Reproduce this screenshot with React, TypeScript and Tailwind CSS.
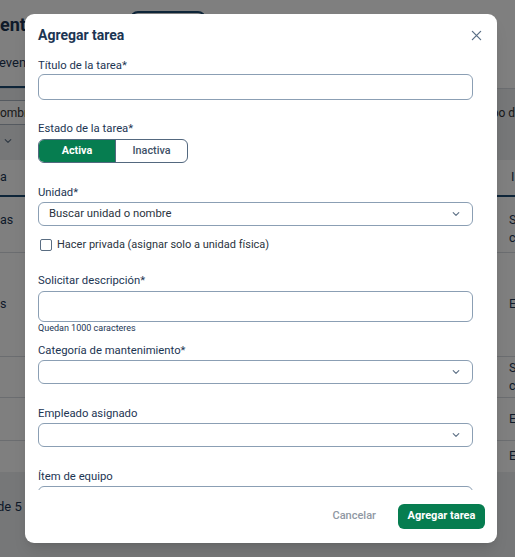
import React from "react";

const font = { fontFamily: "Roboto, 'Noto Sans', sans-serif" };

function Chevron() {
  return (
    <svg width="12" height="12" viewBox="0 0 12 12" fill="none" className="text-[#5b6f84]">
      <path d="M3.2 4.6 L6 7.4 L8.8 4.6" stroke="currentColor" strokeWidth="1.1" strokeLinecap="round" strokeLinejoin="round" />
    </svg>
  );
}

function Label({ children, className = "" }: { children: React.ReactNode; className?: string }) {
  return <div className={`text-[11.3px] leading-[16px] text-[#1c3553] ${className}`}>{children}</div>;
}

function SelectBox({ placeholder, className = "" }: { placeholder?: string; className?: string }) {
  return (
    <div className={`h-[24px] w-[435px] rounded-[6px] border border-[#8b9fb4] flex items-center justify-between pl-[10px] pr-[10px] ${className}`}>
      <span className="text-[11.3px] text-[#2a3340]">{placeholder ?? ""}</span>
      <Chevron />
    </div>
  );
}

export default function App() {
  return (
    <div className="relative w-[515px] h-[557px] overflow-hidden bg-white" style={font}>
      {/* Background page */}
      <div className="flex flex-col w-full h-full text-[#1c3553]">
        <div className="h-[50px] relative flex items-start">
          <span className="mt-[12px] text-[18px] font-bold leading-[26px]">ento</span>
          <div className="absolute left-[130px] top-[11px] w-[76px] h-[28px] rounded-[8px] border-2 border-[#1c4a73]" />
        </div>
        <div className="h-[38px] flex flex-col">
          <span className="text-[13px] leading-[20px] mt-[3px] -ml-[1px]">even</span>
          <div className="mt-auto h-[2px] w-[26px] bg-[#1c4a73]" />
        </div>
        <div className="h-[72px] bg-[#eceef1] flex flex-col border-t border-[#d7dbe0]">
          <div className="flex justify-between mt-[11px]">
            <div className="h-[25px] w-[30px] border-y border-r border-[#aab4c0] bg-white flex items-center text-[12px] text-[#333]">ombr</div>
            <div className="text-[12px] text-[#333] pt-[4px]">po d</div>
          </div>
          <div className="pl-[2px] mt-[10px]">
            <Chevron />
          </div>
        </div>
        <div className="h-[37px] flex items-center justify-between border-b-2 border-[#1c4a73] text-[12.5px]">
          <span>a</span>
          <span className="w-[4px] overflow-hidden">I</span>
        </div>
        <div className="h-[56px] flex justify-between border-b border-[#d7dbe0] text-[12.5px] pt-[14px]">
          <span>as</span>
          <span className="leading-[18px] w-[6px] overflow-hidden">S<br />c</span>
        </div>
        <div className="h-[104px] flex justify-between items-center border-b border-[#d7dbe0] text-[12.5px]">
          <span>s</span>
          <span className="w-[6px] overflow-hidden">E</span>
        </div>
        <div className="h-[41px] flex justify-between items-center border-b border-[#d7dbe0] text-[12.5px]">
          <span />
          <span className="leading-[18px] w-[6px] overflow-hidden">S<br />c</span>
        </div>
        <div className="h-[43px] flex justify-between items-center border-b border-[#d7dbe0] text-[12.5px]">
          <span />
          <span className="w-[6px] overflow-hidden">E</span>
        </div>
        <div className="h-[31px] flex justify-between items-center text-[12.5px]">
          <span />
          <span className="w-[6px] overflow-hidden">E</span>
        </div>
        <div className="flex-1 bg-[#eceef1] pt-[25px] text-[13px]">
          <span className="-ml-[3px]">de 5</span>
        </div>
      </div>

      {/* Overlay */}
      <div className="absolute inset-0 bg-black/50" />

      {/* Modal */}
      <div className="absolute left-[25px] top-[14px] w-[472px] h-[529px] bg-white rounded-[9px] shadow-lg flex flex-col">
        <div className="flex items-start justify-between pl-[13px] pr-[15px] pt-[11px] h-[42px] shrink-0">
          <span className="text-[14px] font-bold text-[#1c3553] leading-[20px]">Agregar tarea</span>
          <svg width="11" height="11" viewBox="0 0 12 12" className="text-[#5a6f86] mt-[5px]">
            <path d="M1.5 1.5 L10.5 10.5 M10.5 1.5 L1.5 10.5" stroke="currentColor" strokeWidth="1.4" strokeLinecap="round" />
          </svg>
        </div>
        <div className="flex-1 overflow-hidden pl-[13px] pr-[24px] flex flex-col">
          <Label className="mt-[2px]">Título de la tarea*</Label>
          <div className="h-[26px] w-[435px] rounded-[6px] border border-[#8b9fb4] shrink-0" />

          <Label className="mt-[21px]">Estado de la tarea*</Label>
          <div className="mt-[2px] flex h-[24px] w-[150px] rounded-[6px] border border-[#53687f] overflow-hidden shrink-0 text-[10.8px]">
            <div className="w-[76px] bg-[#067d50] text-white font-bold flex items-center justify-center">Activa</div>
            <div className="flex-1 border-l border-[#53687f] text-[#3d5066] font-medium flex items-center justify-center">Inactiva</div>
          </div>

          <Label className="mt-[22px]">Unidad*</Label>
          <SelectBox placeholder="Buscar unidad o nombre" className="mt-[1px] shrink-0" />
          <div className="flex items-center mt-[11px] shrink-0">
            <div className="ml-[2px] w-[12px] h-[12px] rounded-[2px] border border-[#5a6d82]" />
            <span className="ml-[5px] text-[11px] text-[#2a3340] leading-[16px]">Hacer privada (asignar solo a unidad física)</span>
          </div>

          <Label className="mt-[20px]">Solicitar descripción*</Label>
          <div className="mt-[2px] h-[31px] w-[435px] rounded-[6px] border border-[#8b9fb4] shrink-0" />
          <div className="text-[9px] leading-[12px] text-[#1c3553]">Quedan 1000 caracteres</div>

          <Label className="mt-[9px]">Categoría de mantenimiento*</Label>
          <SelectBox className="mt-[1px] shrink-0" />

          <Label className="mt-[22px]">Empleado asignado</Label>
          <SelectBox className="mt-[1px] shrink-0" />

          <Label className="mt-[22px]">Ítem de equipo</Label>
          <div className="mt-[1px] h-[24px] w-[435px] rounded-[6px] border border-[#8b9fb4] shrink-0" />
        </div>
        <div className="h-[53px] flex items-center justify-end pr-[12px] gap-[22px] shrink-0">
          <span className="text-[11px] font-medium text-[#8f98a3]">Cancelar</span>
          <div className="h-[25px] w-[87px] rounded-[6px] bg-[#067d50] text-white text-[11px] font-bold flex items-center justify-center">
            Agregar tarea
          </div>
        </div>
      </div>
    </div>
  );
}
